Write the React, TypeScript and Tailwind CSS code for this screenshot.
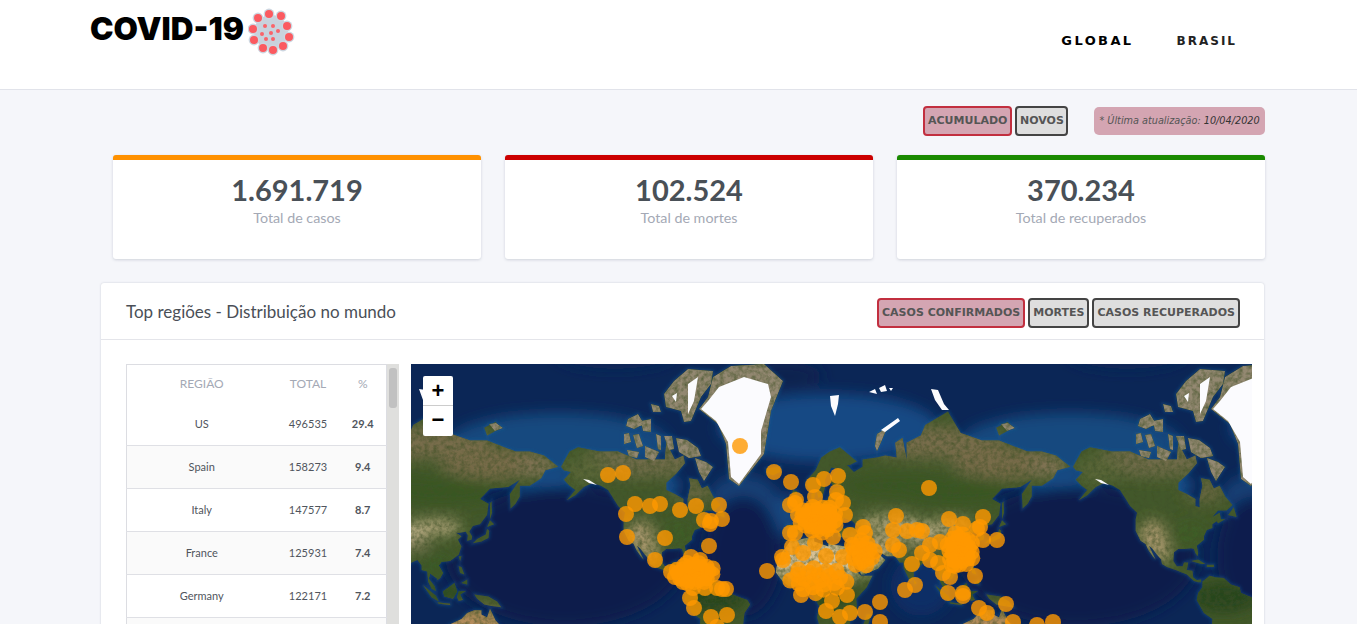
import React from 'react';

type Pt = [number, number];

// map tiles can't be loaded here, so the continents are rough lon/lat outlines
const project = ([lon, lat]: Pt): Pt => [
  ((lon + 180) / 360) * 512 + 133,
  256 - (512 / (2 * Math.PI)) * Math.log(Math.tan(Math.PI / 4 + (lat * Math.PI) / 360)) - 27,
];

const LAND: Pt[][] = [
  // north america
  [[-168,66],[-162,70],[-156,71],[-141,70],[-128,70],[-115,68],[-108,68],[-95,68],[-94,72],[-88,68],[-82,69],[-81,67],[-87,64],[-94,61],[-94,58.5],[-88,57],[-82,55],[-82,52],[-79,51.5],[-79,55],[-77,60],[-78,62.5],[-72,62],[-69,59],[-65,60],[-61,56],[-56,52.5],[-60,50],[-66,50],[-70,47],[-65,49],[-64,46],[-61,46],[-66,44],[-67,45],[-70,43.5],[-70,41.5],[-74,40.5],[-76,37],[-76,35],[-81,31.5],[-80,27],[-80.5,25],[-82,27],[-83,29.5],[-85,30],[-90,29.5],[-94,29.5],[-97,27.5],[-97.5,22],[-95,18.5],[-91,18.5],[-90,21],[-87,21],[-88,16],[-84,15.5],[-83.5,11],[-81,9],[-78,9.5],[-78,7.5],[-80,7.5],[-83,8.5],[-86,11],[-88,13],[-92,14.5],[-96,16],[-102,18],[-105.5,20],[-106,23],[-109,26],[-112.5,30],[-114.7,31.5],[-110,23],[-112,25],[-115,29],[-117,32.5],[-120.5,34.5],[-124,40],[-124,46],[-123,49],[-128,52],[-131,55],[-135,58.5],[-140,60],[-146,61],[-152,59.5],[-158,56.5],[-164,54.5],[-158,58.5],[-162,60],[-166,62],[-161,64.5],[-166,65]],
  // south america
  [[-77,8],[-72,12],[-68,11],[-62,10.5],[-57,6],[-51,4],[-50,0],[-44,-2.5],[-37,-5],[-35,-8],[-39,-14],[-40,-22],[-48,-26],[-54,-34],[-58,-38],[-65,-42],[-68,-52],[-72,-50],[-73,-40],[-71,-30],[-70,-18],[-76,-14],[-81,-5],[-80,0],[-77,4]],
  // eurasia
  [[-9,37],[-9.5,43],[-2,43.5],[-1,46],[-4.5,48.5],[2,51],[4,52.5],[8,54],[8,57],[10.5,57.5],[10,54.5],[14,54],[19,54.5],[21,57],[24,59],[30,60],[23,60],[21,62],[25,65.5],[22,65.8],[17.5,62],[18,60],[16,56.5],[13,55.5],[11,59],[7,58],[5,60],[5,62],[11,65],[15,68.5],[21,70],[28,71],[40,67.5],[35,66.5],[33,66.5],[38,64.5],[44,66],[44,68],[54,68.5],[60,69],[68,68.5],[67,72],[72,73],[75,68],[75,72],[85,73.5],[88,75.5],[104,77.7],[113,74],[128,72.5],[140,72.5],[160,70],[170,70],[180,69],[190,66],[181,65],[178,62.5],[170,60],[163,60],[163,56],[160,53],[156.5,51],[156,57],[163,62],[155,59.5],[142,59],[135,55],[141,53],[140,48],[135,43.5],[130,42.5],[127.5,39.5],[129.5,37],[129,35],[126,34.5],[126.5,37.5],[125,39.5],[121,39],[118,39],[122,37],[119.5,35],[122,31],[120,26],[114,22],[108,21.5],[106,19],[109,14],[107,10.5],[105,9],[105,10],[100,13.5],[99,10],[103,5],[104,1.5],[101,3],[98.5,8],[98,15],[94,16],[94,19],[91,22.5],[87,21],[80,15],[80,10],[77.5,8],[73,17],[72.5,21],[70,21],[68,23.5],[67,25],[61,25],[57,27],[51,28],[48,30],[50,26.5],[51.5,24],[54,24],[56,26],[60,22.5],[55,17],[45,13],[43,13],[39,21],[35,28],[32.5,30],[34.5,31.5],[36,36],[30,36.5],[27,37],[26.5,40],[29,41],[35,42],[41.5,41.5],[37,45],[31,46.5],[28,42],[26,40.8],[23,40.5],[23,36.5],[19.5,41],[14,45],[12.5,44],[18,40],[16,38],[12,42],[9,44],[3,43],[0,39.5],[-2,36.8],[-5.5,36]],
  // africa
  [[-6,35.8],[-1,35],[10,37],[10,34],[15,32.5],[20,31],[20,32.8],[25,32],[32,31],[34,28],[37,21],[39.5,15],[43,12],[51,12],[47,4],[39.5,-4],[40.5,-15],[35,-20],[35,-24],[32,-29],[26,-34],[18,-34],[15,-27],[12,-17],[13.5,-9],[9,-1],[9.5,4],[4,6],[-4,5],[-8,4.5],[-13,9],[-17,14.5],[-16,20],[-13,27],[-9.5,31]],
  [[-59,48],[-55,51.5],[-53,47]],
  [[-24,65.5],[-14,66],[-14,64.5],[-19,63.5],[-23,64]],
  [[-5.5,50],[1.5,51.5],[0,54],[-2,56],[-2,58],[-5,58.5],[-6,55.5],[-3,54],[-5,52]],
  [[-10,52],[-6,52],[-6,55],[-9,54.5]],
  [[-85,22],[-80,23],[-75,20],[-78,20]],
  [[-74,19.5],[-69,19.5],[-69,18],[-74,18]],
  [[47,-15],[50,-15],[47,-25],[44,-23]],
  [[130,33],[136,34],[141,36],[141.5,40],[140,41],[139,38],[133,35.5]],
  [[140,42],[145,43.5],[142,45.5]],
  [[142,46],[143.5,49],[143,54],[142,53]],
  [[120,25],[122,25],[121,22]],
  [[120,18.5],[122,18],[124,13],[121,14]],
  [[122,7],[126,9.5],[126,6]],
  [[109,1],[117,7],[119,1],[116,-4],[110,-2.5]],
  [[95,5.5],[104,-2],[106,-6],[101,-3]],
  [[105,-6.5],[114,-7.5],[114,-8.5],[106,-7.5]],
  [[119,-3],[120,1],[125,1.5],[121,-1],[123,-5],[120,-5.5]],
  [[131,-1],[141,-2.5],[147,-6],[150,-10],[143,-9],[138,-8],[133,-4]],
  [[113,-22],[122,-18],[126,-14],[131,-12],[136,-12],[136,-15],[140,-17],[142,-11],[146,-19],[153,-26],[150,-37],[140,-38],[131,-32],[116,-34]],
  [[80,9.5],[82,7],[80.5,6]],
  [[138,75],[146,76],[150,75],[140,73.5]],
];

// traced straight from the map's pixels (arctic islands, greenland)
const ROCK_PX: Pt[][] = [
  [[302,13],[320,2],[353,0],[372,17],[360,47],[353,90],[328,122],[318,115],[315,80],[307,60],[288,45],[297,33]],
  [[263,17],[277,5],[302,7],[300,20],[290,33],[280,57],[273,58],[270,47],[255,43],[253,30]],
  [[213,70],[218,69],[220,78],[213,80]],
  [[222,71],[228,70],[232,82],[226,84]],
  [[234,82],[248,88],[243,97],[234,93]],
  [[216,86],[228,88],[226,94],[218,92]],
  [[217,55],[227,50],[233,60],[223,65],[215,62]],
  [[240,40],[248,42],[250,48],[242,48]],
  [[230,57],[240,55],[240,68],[232,67]],
  [[253,72],[261,72],[263,85],[258,86]],
  [[265,74],[276,76],[287,84],[290,92],[278,94],[268,88]],
  [[284,94],[295,98],[302,103],[293,117],[288,108]],
  [[245,70],[250,72],[250,86],[247,85]],
  [[78,60],[85,59],[92,64],[84,67]],
  [[466,70],[476,64],[470,78],[466,87],[464,82]],
];

const ICE_PX: Pt[][] = [
  [[297,37],[308,23],[333,13],[357,20],[360,33],[350,67],[350,90],[328,120],[320,113],[317,78],[305,57],[290,45]],
  [[277,20],[287,13],[283,37],[277,50]],
  [[261,32],[266,29],[265,38]],
  [[419,32],[428,31],[427,40],[424,52],[420,42]],
  [[458,28],[464,25],[466,30]],
  [[468,24],[474,21],[476,27],[470,28]],
  [[478,24],[482,24],[480,27]],
  [[520,25],[527,26],[533,40],[538,46],[531,46],[524,36]],
  [[487,54],[489,57],[474,68],[470,66]],
  [[172,115],[178,116],[186,121],[178,119]],
];

// blurred colour patches on the land: lon, lat, rx, ry (px), colour
const TERRAIN: [number, number, number, number, string][] = [
  [-110, 68, 60, 18, '#6f6c49'],
  [-75, 58, 22, 12, '#66663f'],
  [-150, 65, 22, 14, '#5a6637'],
  [95, 72, 70, 16, '#786d4b'],
  [145, 67, 55, 16, '#786c4a'],
  [175, 66, 20, 10, '#837557'],
  [70, 60, 60, 12, '#375522'],
  [110, 58, 60, 14, '#395624'],
  [8, 23, 62, 22, '#d6c094'],
  [30, 24, 22, 16, '#d9c59a'],
  [45, 24, 22, 15, '#d8c28e'],
  [58, 32, 22, 10, '#bba679'],
  [62, 44, 30, 8, '#b3a67c'],
  [85, 40, 24, 7, '#d2c09a'],
  [105, 42, 24, 7, '#bfae84'],
  [88, 32, 18, 5, '#8f8364'],
  [-112, 37, 13, 16, '#ad9a70'],
  [-105, 27, 8, 10, '#b5a074'],
  [-62, -3, 35, 16, '#26451b'],
  [20, 0, 28, 16, '#2a4a1e'],
  [105, 18, 18, 14, '#3a5a28'],
  [115, 0, 24, 10, '#2c4c22'],
  [-85, 38, 16, 12, '#3d5d26'],
  [130, -24, 40, 20, '#b58d5c'],
];

// lighter shallow water and dark basins
const WATER: [number, number, number, number, string][] = [
  [-170, 72, 110, 30, '#14487f'],
  [-100, 60, 22, 14, '#16508a'],
  [20, 75, 110, 34, '#144a84'],
  [-40, 55, 34, 24, '#123f76'],
  [-10, 48, 16, 20, '#14467f'],
  [-175, 58, 36, 18, '#164f8a'],
  [-10, 82, 36, 14, '#0a2150'],
  [-130, 84, 60, 16, '#0c2856'],
  [-165, 25, 120, 70, '#0a1e4b'],
  [-40, 25, 38, 60, '#0a1f4d'],
  [85, 5, 30, 30, '#102f66'],
];

const toPath = (list: Pt[][], proj: (p: Pt) => Pt) =>
  [-512, 0, 512]
    .map((off) =>
      list
        .map((poly) => 'M' + poly.map(proj).map(([x, y]) => `${(x + off).toFixed(1)} ${y.toFixed(1)}`).join('L') + 'Z')
        .join(''),
    )
    .join('');

const asIs = (p: Pt) => p;
const rockPath = toPath(ROCK_PX, asIs);
const landPath = toPath(LAND, project) + rockPath;
const icePath = toPath(ICE_PX, asIs);

// sunflower spread, so a dense area gets a scalloped edge and not a grid
const blob = (cx: number, cy: number, rx: number, ry: number, n: number): Pt[] =>
  Array.from({ length: n }, (_, i) => {
    const a = i * 2.399963;
    const r = Math.sqrt((i + 0.5) / n);
    return [cx + rx * r * Math.cos(a), cy + ry * r * Math.sin(a)] as Pt;
  });

const DOTS: Pt[] = [
  [197,111],[212,109],[329,82],[363,108],[380,118],[224,140],[239,142],[249,140],[215,150],[269,146],[285,142],[308,141],[311,155],[293,156],[300,157],[299,160],[216,173],[254,174],[298,182],[244,196],
  [280,193],[289,196],[276,199],[260,208],[267,209],[264,213],[272,218],[282,224],[294,224],[306,224],[311,225],[315,225],[279,234],[283,244],[300,253],[316,251],[306,263],
  [402,121],[413,115],[427,112],[404,133],[426,128],[425,136],[385,136],[379,141],[384,139],[432,139],[387,151],[434,151],[422,173],
  [379,169],[384,169],[404,179],[381,183],[392,189],[372,196],[371,193],[356,207],[415,192],[432,193],[441,181],[439,171],[454,169],[452,163],[485,152],[482,166],[496,167],[506,166],[482,181],[488,186],[501,200],[494,226],[504,221],[469,238],
  [390,231],[421,237],[436,231],[415,247],[454,248],[429,253],[439,249],[469,258],
  [518,124],[511,167],[538,155],[572,153],[552,160],[569,163],[566,165],[586,176],[572,176],[564,212],[537,229],[552,229],[552,232],[568,244],[576,249],[595,240],[602,258],[626,261],[642,258],
  [529,178],[519,181],[511,189],[519,196],[527,199],[541,201],[532,209],[539,213],
  // the dense parts, where the circles melt into one blob
  ...blob(408, 155, 20, 14, 34),
  ...blob(284, 209, 20, 11, 28),
  ...blob(549, 186, 14, 18, 30),
  ...blob(452, 190, 13, 14, 16),
  ...blob(406, 216, 30, 14, 22),
];

const ROWS = [
  ['US', '496535', '29.4'],
  ['Spain', '158273', '9.4'],
  ['Italy', '147577', '8.7'],
  ['France', '125931', '7.4'],
  ['Germany', '122171', '7.2'],
];

const CARDS = [
  { value: '1.691.719', label: 'Total de casos', bar: 'border-t-[#ff9100]' },
  { value: '102.524', label: 'Total de mortes', bar: 'border-t-[#cc0000]' },
  { value: '370.234', label: 'Total de recuperados', bar: 'border-t-[#1a8a00]' },
];

const SPIKES: Pt[] = [[29,9],[41,11],[47,21],[49,32],[43,41],[33,45],[23,43],[14,35],[13,24],[18,13]];
const SPORES: Pt[] = [[25,21],[33,21],[38,26],[31,28],[22,29],[26,34],[33,34]];

function VirusLogo() {
  return (
    <svg width="52" height="55" viewBox="8 0 52 55" className="ml-[4px] mt-[5px]">
      <circle cx="31" cy="27" r="17" fill="#c8d2dd" />
      {SPIKES.map(([x, y]) => (
        <g key={`${x}-${y}`}>
          <circle cx={x} cy={y} r="5.4" fill="#cdd6e0" />
          <circle cx={x} cy={y} r="4" fill="#fb5a60" />
        </g>
      ))}
      {SPORES.map(([x, y]) => (
        <circle key={`${x}-${y}`} cx={x} cy={y} r="2" fill="#f9646a" />
      ))}
    </svg>
  );
}

function ToggleButton({ active, width, children }: { active?: boolean; width?: string; children: React.ReactNode }) {
  return (
    <button
      className={`h-[30px] px-[3px] pt-[1px] rounded-[4px] border-2 font-['DejaVu_Sans',sans-serif] font-bold text-[11px] text-[#555] whitespace-nowrap ${width ?? ''} ${
        active ? 'border-[#c22f3f] bg-[#d4a5b2]' : 'border-[#444] bg-[#dedede]'
      }`}
    >
      {children}
    </button>
  );
}

function WorldMap() {
  return (
    <div className="relative flex-1 h-[260px] overflow-hidden bg-[#0b2656]">
      <svg width="841" height="260" viewBox="0 0 841 260" className="block">
        <defs>
          <clipPath id="land">
            <path d={landPath} />
          </clipPath>
          <filter id="soft" x="-30%" y="-30%" width="160%" height="160%">
            <feGaussianBlur stdDeviation="7" />
          </filter>
          <filter id="shelf" x="-5%" y="-5%" width="110%" height="110%">
            <feGaussianBlur stdDeviation="1.5" />
          </filter>
          <filter id="edge">
            <feGaussianBlur stdDeviation="0.5" />
          </filter>
          <filter id="grain" x="0" y="0" width="100%" height="100%">
            <feTurbulence type="fractalNoise" baseFrequency="0.22" numOctaves="3" seed="4" />
            <feColorMatrix values="0 0 0 0 0.05  0 0 0 0 0.08  0 0 0 0 0.02  1.3 0 0 0 -0.45" />
          </filter>
        </defs>

        <rect width="841" height="260" fill="#0b2656" />
        <g filter="url(#soft)">
          {WATER.flatMap(([lon, lat, rx, ry, color], i) =>
            [0, 512].map((off) => {
              const [x, y] = project([lon, lat]);
              return <ellipse key={`${i}-${off}`} cx={x + off} cy={y} rx={rx} ry={ry} fill={color} />;
            }),
          )}
        </g>
        <path d={landPath} fill="none" stroke="#1b5c96" strokeOpacity="0.4" strokeWidth="3" filter="url(#shelf)" />

        <g filter="url(#edge)">
          <path d={landPath} fill="#43592a" />
          <g clipPath="url(#land)">
            <g filter="url(#soft)">
              {TERRAIN.flatMap(([lon, lat, rx, ry, color], i) =>
                [-512, 0, 512].map((off) => {
                  const [x, y] = project([lon, lat]);
                  return <ellipse key={`${i}-${off}`} cx={x + off} cy={y} rx={rx} ry={ry} fill={color} />;
                }),
              )}
            </g>
            <path d={rockPath} fill="#938871" />
            <rect width="841" height="260" filter="url(#grain)" />
          </g>
          <path d={icePath} fill="#fbfbfe" />
        </g>

        <g fill="#ff9800" fillOpacity="0.8">
          {DOTS.map(([x, y], i) => (
            <circle key={i} cx={x} cy={y} r="8" />
          ))}
        </g>
      </svg>

      {/* leaflet zoom control */}
      <div className="absolute left-[12px] top-[12px] w-[30px] rounded-[2px] bg-white overflow-hidden font-['Liberation_Sans',sans-serif] font-bold text-[22px] text-black text-center">
        <div className="h-[30px] leading-[30px] border-b border-[#ccc]">+</div>
        <div className="h-[30px] leading-[28px]">−</div>
      </div>
    </div>
  );
}

export default function App() {
  return (
    <div className="h-[624px] overflow-hidden bg-[#f5f6fa] font-['Lato',sans-serif]">
      <header className="h-[90px] bg-white border-b border-[#e1e3ea] flex justify-between pl-[90px] pr-[120px]">
        <div className="flex items-start">
          <span className="font-['Inter',sans-serif] font-black text-[31.5px] leading-none mt-[13px] text-black">COVID-19</span>
          <VirusLogo />
        </div>
        <nav className="flex items-center gap-[43px] font-['DejaVu_Sans',sans-serif] font-bold pb-[8px]">
          <a className="text-[13px] tracking-[2.4px] text-black">GLOBAL</a>
          <a className="text-[12px] tracking-[2px] text-[#222]">BRASIL</a>
        </nav>
      </header>

      <div className="flex justify-end items-center mt-[16px] pr-[92px]">
        <div className="flex gap-[3px]">
          <ToggleButton active width="w-[89px]">ACUMULADO</ToggleButton>
          <ToggleButton width="w-[53px]">NOVOS</ToggleButton>
        </div>
        <div className="ml-[26px] w-[171px] h-[28px] flex items-center justify-center rounded-[5px] bg-[#d4a5b2] font-['DejaVu_Sans',sans-serif] italic text-[9.7px] text-[#555] whitespace-nowrap">
          * Última atualização:&nbsp;<span className="text-[#333]">10/04/2020</span>
        </div>
      </div>

      <div className="grid grid-cols-3 gap-[24px] ml-[113px] mr-[92px] mt-[19px]">
        {CARDS.map((card) => (
          <div
            key={card.label}
            className={`h-[104px] bg-white rounded-[3px] border-t-[5px] shadow-[0_1px_3px_rgba(60,70,100,0.2)] text-center ${card.bar}`}
          >
            <div className="mt-[12px] text-[29px] leading-[36px] font-bold text-[#495057]">{card.value}</div>
            <div className="pt-[1px] text-[14.3px] leading-[18px] text-[#a4a9b5]">{card.label}</div>
          </div>
        ))}
      </div>

      <section className="ml-[101px] mr-[93px] mt-[24px] bg-white rounded-[3px] shadow-[0_0_2px_rgba(60,70,100,0.25)]">
        <div className="h-[57px] pl-[25px] pr-[24px] flex items-center justify-between border-b border-[#e4e5ea]">
          <h2 className="pt-[2px] text-[17px] text-[#4a4f57]">Top regiões - Distribuição no mundo</h2>
          <div className="flex gap-[3px] mt-[4px]">
            <ToggleButton active>CASOS CONFIRMADOS</ToggleButton>
            <ToggleButton>MORTES</ToggleButton>
            <ToggleButton>CASOS RECUPERADOS</ToggleButton>
          </div>
        </div>

        <div className="flex gap-[12px] pl-[25px] pr-[12px] pt-[24px] h-[300px]">
          <div className="flex w-[273px] h-[300px] shrink-0">
            <table className="w-[261px] h-fit table-fixed border border-[#dcdde2] border-collapse text-[11px] text-[#50555d]">
              <thead>
                <tr className="h-[38px] text-[12px] text-[#a4a9b5]">
                  <th className="w-[150px] pt-[1px] font-normal">REGIÃO</th>
                  <th className="w-[63px] pt-[1px] font-normal">TOTAL</th>
                  <th className="pt-[1px] font-normal">%</th>
                </tr>
              </thead>
              <tbody>
                {ROWS.map(([region, total, pct], i) => (
                  <tr key={region} className={`h-[43px] border-b border-[#dfe0e5] text-center ${i % 2 ? 'bg-[#fafafa]' : 'bg-white'}`}>
                    <td>{region}</td>
                    <td>{total}</td>
                    <td className="font-bold">{pct}</td>
                  </tr>
                ))}
                <tr className="h-[43px] bg-[#fafafa]">
                  <td colSpan={3} />
                </tr>
              </tbody>
            </table>
            <div className="w-[12px] h-[300px] bg-[#dfdfdd] px-[2px] pt-[4px]">
              <div className="h-[40px] rounded-[3px] bg-[#c1c1c1]" />
            </div>
          </div>
          <WorldMap />
        </div>
      </section>
    </div>
  );
}
